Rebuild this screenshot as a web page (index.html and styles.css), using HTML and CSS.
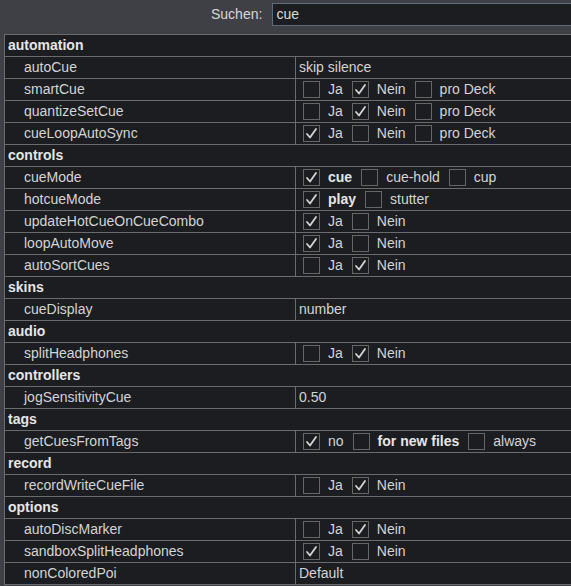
FILE: index.html
```html
<!DOCTYPE html>
<html lang="de">
<head>
<meta charset="utf-8">
<title>Einstellungen</title>
<link rel="stylesheet" href="styles.css">
</head>
<body>
<div class="page">
  <div class="search-bar">
    <label class="search-label" for="q">Suchen:</label>
    <input class="search-input" id="q" type="text" value="cue">
  </div>

  <div class="settings">
    <div class="section">automation</div>
    <div class="row"><div class="name">autoCue</div><div class="value">skip silence</div></div>
    <div class="row"><div class="name">smartCue</div><div class="value">
      <span class="box"></span><span class="opt">Ja</span>
      <span class="box on"><svg viewBox="0 0 17 17"><polyline points="4,9 7,12.5 13,4"/></svg></span><span class="opt">Nein</span>
      <span class="box"></span><span class="opt">pro Deck</span>
    </div></div>
    <div class="row"><div class="name">quantizeSetCue</div><div class="value">
      <span class="box"></span><span class="opt">Ja</span>
      <span class="box on"><svg viewBox="0 0 17 17"><polyline points="4,9 7,12.5 13,4"/></svg></span><span class="opt">Nein</span>
      <span class="box"></span><span class="opt">pro Deck</span>
    </div></div>
    <div class="row"><div class="name">cueLoopAutoSync</div><div class="value">
      <span class="box on"><svg viewBox="0 0 17 17"><polyline points="4,9 7,12.5 13,4"/></svg></span><span class="opt">Ja</span>
      <span class="box"></span><span class="opt">Nein</span>
      <span class="box"></span><span class="opt">pro Deck</span>
    </div></div>

    <div class="section">controls</div>
    <div class="row"><div class="name">cueMode</div><div class="value">
      <span class="box on"><svg viewBox="0 0 17 17"><polyline points="4,9 7,12.5 13,4"/></svg></span><span class="opt bold">cue</span>
      <span class="box"></span><span class="opt">cue-hold</span>
      <span class="box"></span><span class="opt">cup</span>
    </div></div>
    <div class="row"><div class="name">hotcueMode</div><div class="value">
      <span class="box on"><svg viewBox="0 0 17 17"><polyline points="4,9 7,12.5 13,4"/></svg></span><span class="opt bold">play</span>
      <span class="box"></span><span class="opt">stutter</span>
    </div></div>
    <div class="row"><div class="name">updateHotCueOnCueCombo</div><div class="value">
      <span class="box on"><svg viewBox="0 0 17 17"><polyline points="4,9 7,12.5 13,4"/></svg></span><span class="opt">Ja</span>
      <span class="box"></span><span class="opt">Nein</span>
    </div></div>
    <div class="row"><div class="name">loopAutoMove</div><div class="value">
      <span class="box on"><svg viewBox="0 0 17 17"><polyline points="4,9 7,12.5 13,4"/></svg></span><span class="opt">Ja</span>
      <span class="box"></span><span class="opt">Nein</span>
    </div></div>
    <div class="row"><div class="name">autoSortCues</div><div class="value">
      <span class="box"></span><span class="opt">Ja</span>
      <span class="box on"><svg viewBox="0 0 17 17"><polyline points="4,9 7,12.5 13,4"/></svg></span><span class="opt">Nein</span>
    </div></div>

    <div class="section">skins</div>
    <div class="row"><div class="name">cueDisplay</div><div class="value">number</div></div>

    <div class="section">audio</div>
    <div class="row"><div class="name">splitHeadphones</div><div class="value">
      <span class="box"></span><span class="opt">Ja</span>
      <span class="box on"><svg viewBox="0 0 17 17"><polyline points="4,9 7,12.5 13,4"/></svg></span><span class="opt">Nein</span>
    </div></div>

    <div class="section">controllers</div>
    <div class="row"><div class="name">jogSensitivityCue</div><div class="value">0.50</div></div>

    <div class="section">tags</div>
    <div class="row"><div class="name">getCuesFromTags</div><div class="value">
      <span class="box on"><svg viewBox="0 0 17 17"><polyline points="4,9 7,12.5 13,4"/></svg></span><span class="opt">no</span>
      <span class="box"></span><span class="opt bold">for new files</span>
      <span class="box"></span><span class="opt">always</span>
    </div></div>

    <div class="section">record</div>
    <div class="row"><div class="name">recordWriteCueFile</div><div class="value">
      <span class="box"></span><span class="opt">Ja</span>
      <span class="box on"><svg viewBox="0 0 17 17"><polyline points="4,9 7,12.5 13,4"/></svg></span><span class="opt">Nein</span>
    </div></div>

    <div class="section">options</div>
    <div class="row"><div class="name">autoDiscMarker</div><div class="value">
      <span class="box"></span><span class="opt">Ja</span>
      <span class="box on"><svg viewBox="0 0 17 17"><polyline points="4,9 7,12.5 13,4"/></svg></span><span class="opt">Nein</span>
    </div></div>
    <div class="row"><div class="name">sandboxSplitHeadphones</div><div class="value">
      <span class="box on"><svg viewBox="0 0 17 17"><polyline points="4,9 7,12.5 13,4"/></svg></span><span class="opt">Ja</span>
      <span class="box"></span><span class="opt">Nein</span>
    </div></div>
    <div class="row"><div class="name">nonColoredPoi</div><div class="value">Default</div></div>
  </div>
</div>
</body>
</html>
```

FILE: styles.css
```css
html, body {
  margin: 0;
  padding: 0;
  overflow: hidden;
  background: #3f4045;
}

body {
  font-family: "Liberation Sans", Arial, sans-serif;
  font-size: 14px;
  color: #d4d4d4;
}

.page {
  width: 800px;
}

.search-bar {
  display: flex;
  align-items: center;
  gap: 10px;
  padding: 3px 0 0 211px;
  height: 22px;
}

.search-label {
  color: #d8d8d8;
  font-size: 14px;
}

.search-input {
  box-sizing: border-box;
  width: 420px;
  height: 23px;
  margin: 0;
  padding: 0 3px;
  border: 1px solid #5e6b7b;
  background: #1c1d20;
  color: #dcdcdc;
  font-family: "Liberation Sans", Arial, sans-serif;
  font-size: 14px;
  outline: none;
}

.settings {
  margin: 9px 0 0 4px;
  width: 760px;
  border: 1px solid #6b6b6b;
  border-bottom: none;
  background: #1c1d20;
}

.section {
  box-sizing: border-box;
  height: 22px;
  line-height: 21px;
  padding-left: 3px;
  border-bottom: 1px solid #6b6b6b;
  font-weight: bold;
  color: #e6e6e6;
}

.row {
  box-sizing: border-box;
  display: flex;
  height: 22px;
  border-bottom: 1px solid #6b6b6b;
}

.name {
  box-sizing: border-box;
  width: 291px;
  flex: none;
  padding-left: 19px;
  line-height: 21px;
  border-right: 1px solid #6b6b6b;
}

.value {
  display: flex;
  align-items: center;
  gap: 8px;
  padding-left: 3px;
  line-height: 21px;
}

.box {
  box-sizing: border-box;
  width: 17px;
  height: 17px;
  flex: none;
  border: 1px solid #666;
  background: #1c1d20;
  position: relative;
}

.box:first-child {
  margin-left: 4px;
}

.box svg {
  position: absolute;
  left: -1px;
  top: -1px;
  width: 17px;
  height: 17px;
}

.box svg polyline {
  fill: none;
  stroke: #d6d6d6;
  stroke-width: 1.8;
  stroke-linecap: round;
  stroke-linejoin: round;
}

.opt {
  margin-right: 1px;
}

.bold {
  font-weight: bold;
  color: #e6e6e6;
}
```
